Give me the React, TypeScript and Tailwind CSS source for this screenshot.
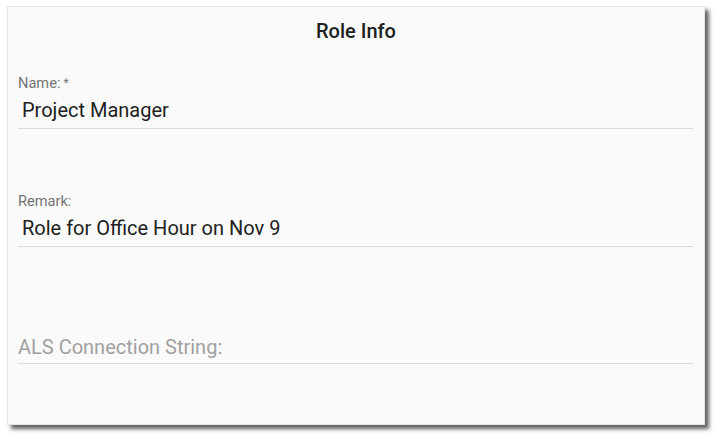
import { useState } from 'react';

interface Field {
  label: string;
  required?: boolean;
  value: string;
  placeholder?: string;
}

const fields: Field[] = [
  { label: 'Name:', required: true, value: 'Project Manager' },
  { label: 'Remark:', value: 'Role for Office Hour on Nov 9' },
  { label: '', value: '', placeholder: 'ALS Connection String:' },
];

export default function App() {
  const [values] = useState<Field[]>(fields);

  return (
    <div className="w-[720px] h-[440px] bg-white pl-[7px] pt-[6px] font-['Roboto','Liberation_Sans',sans-serif]">
      <div className="w-[698px] h-[419px] bg-[#fafafa] border border-[#e6e6e6] shadow-[4px_4px_4px_rgba(0,0,0,0.62)] px-[10px] pt-[12px]">
        {/* Title */}
        <div className="text-center text-[20px] leading-[24px] font-medium text-[#212121]">Role Info</div>

        <div className="mt-[32px] flex flex-col">
          {values.map((f, i) => (
            <div key={i} className="h-[117.5px]">
              <div className="h-[16px] text-[14.6px] leading-[16px] text-[#757575]">
                {f.label}
                {f.required && <span className="ml-[3px] text-[12px] align-top">*</span>}
              </div>
              <div className="mt-[7px] pb-[6px] border-b border-[#dcdcdc] w-[675px]">
                {f.placeholder ? (
                  <div className="h-[24px] text-[20px] leading-[24px] text-[#a0a0a0] translate-y-[2px]">{f.placeholder}</div>
                ) : (
                  <div className="h-[24px] pl-[4px] text-[20px] leading-[24px] text-[#212121]">{f.value}</div>
                )}
              </div>
            </div>
          ))}
        </div>
      </div>
    </div>
  );
}
